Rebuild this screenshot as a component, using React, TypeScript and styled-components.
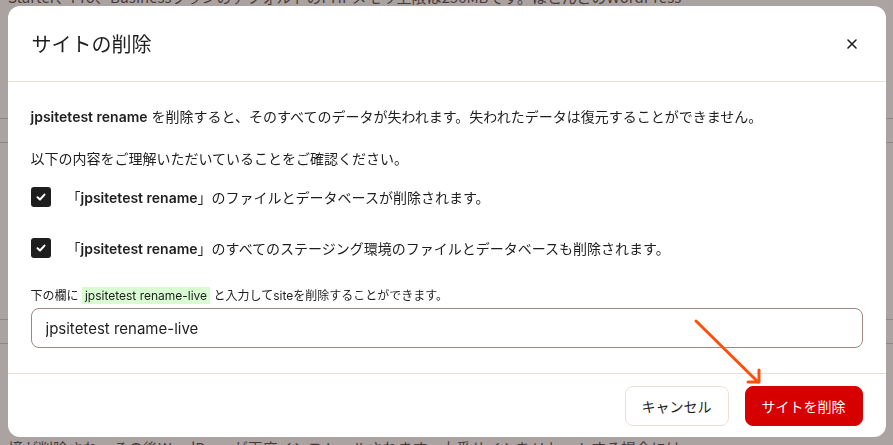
import React, { useState } from 'react';
import styled, { createGlobalStyle } from 'styled-components';

const GlobalStyle = createGlobalStyle`
  html, body {
    margin: 0;
    padding: 0;
    height: 100%;
    overflow: hidden;
  }
  body {
    font-family: Inter, "Noto Sans CJK JP", sans-serif;
    color: #1e1e1e;
  }
`;

const Page = styled.div`
  height: 100vh;
  display: flex;
  flex-direction: column;
  justify-content: space-between;
  padding: 0 8px;
  background: #fff;
  font-family: "Noto Sans CJK JP", sans-serif;
  font-size: 15px;
  line-height: 20px;
  color: #3a3030;
  overflow: hidden;
`;

const PageLine = styled.div<{ edge: 'top' | 'bottom' }>`
  white-space: nowrap;
  margin-top: ${p => (p.edge === 'top' ? '-13px' : '0')};
  margin-bottom: ${p => (p.edge === 'bottom' ? '-13px' : '0')};
`;

const TableRows = styled.div`
  display: flex;
  flex-direction: column;
  gap: 176px;
  margin: 16px -8px 0;
`;

const RowPair = styled.div`
  height: 23px;
  border-top: 1px solid #c9c2c2;
  border-bottom: 1px solid #c9c2c2;
`;

const Overlay = styled.div`
  position: fixed;
  inset: 0;
  background: rgba(85, 71, 69, 0.5);
  display: flex;
  align-items: center;
  justify-content: center;
`;

const Modal = styled.div`
  width: 878px;
  height: 431px;
  margin-top: -2px;
  background: #fff;
  border-radius: 12px;
  display: flex;
  flex-direction: column;
  overflow: hidden;
  position: relative;
`;

const Header = styled.div`
  height: 75px;
  flex: none;
  display: flex;
  align-items: center;
  justify-content: space-between;
  padding: 0 24px 0 24px;
  border-bottom: 1px solid #ebe0d7;
`;

const Title = styled.h2`
  margin: 0;
  font-family: "Noto Sans CJK JP", sans-serif;
  font-size: 20px;
  font-weight: 400;
  color: #1e1e1e;
`;

const CloseButton = styled.button`
  background: none;
  border: none;
  padding: 0;
  width: 20px;
  height: 20px;
  display: flex;
  align-items: center;
  justify-content: center;
  cursor: pointer;
  color: #1e1e1e;
`;

const Body = styled.div`
  flex: 1;
  padding: 25px 23px 0 23px;
  display: flex;
  flex-direction: column;
  border-bottom: 1px solid #e6ddd6;
`;

const Text = styled.p<{ gap?: number }>`
  margin: 0 0 ${p => p.gap ?? 0}px 0;
  font-size: 14px;
  line-height: 20px;
  color: #1e1e1e;
`;

const CheckRow = styled.label<{ gap?: number }>`
  display: flex;
  align-items: center;
  gap: 16px;
  height: 20px;
  margin-bottom: ${p => p.gap ?? 0}px;
  font-size: 14px;
  cursor: pointer;
`;

const Box = styled.span`
  width: 20px;
  height: 20px;
  flex: none;
  border-radius: 3px;
  background: #1e1e1e;
  display: flex;
  align-items: center;
  justify-content: center;
`;

const Strong = styled.strong`
  font-weight: 600;
`;

const HintLabel = styled.div`
  font-size: 12px;
  line-height: 16px;
  margin-bottom: 4px;
  color: #1e1e1e;
`;

const Code = styled.span`
  background: #d8fbd2;
  padding: 1px 3px;
`;

const Input = styled.input`
  height: 40px;
  box-sizing: border-box;
  width: 100%;
  border: 1px solid #9c8782;
  border-radius: 8px;
  padding: 0 14px;
  font-family: Inter, "Noto Sans CJK JP", sans-serif;
  font-size: 15px;
  color: #1e1e1e;
  outline: none;
`;

const Footer = styled.div`
  height: 63px;
  flex: none;
  display: flex;
  align-items: center;
  justify-content: flex-end;
  gap: 16px;
  padding: 0 23px 0 0;
`;

const Button = styled.button<{ danger?: boolean }>`
  height: 40px;
  padding: 0 16px;
  border-radius: 8px;
  font-family: "Noto Sans CJK JP", sans-serif;
  font-size: 14px;
  cursor: pointer;
  border: 1px solid ${p => (p.danger ? '#d70000' : '#ebe0d7')};
  background: ${p => (p.danger ? '#d70000' : '#fff')};
  color: ${p => (p.danger ? '#fff' : '#1e1e1e')};
  min-width: ${p => (p.danger ? '116px' : '103px')};
`;

const Arrow = styled.svg`
  position: absolute;
  left: 684px;
  top: 312px;
  pointer-events: none;
`;

const Check = () => (
  <svg width="12" height="12" viewBox="0 0 12 12">
    <path d="M2.5 6.2 L5 8.5 L9.5 3.6" fill="none" stroke="#fff" strokeWidth="2" strokeLinecap="round" strokeLinejoin="round" />
  </svg>
);

export default function App() {
  const [value, setValue] = useState('jpsitetest rename-live');
  const site = 'jpsitetest rename';

  return (
    <>
      <GlobalStyle />
      <Page>
        <PageLine edge="top">Starter、Pro、BusinessプランのデフォルトのPHPメモリ上限は256MBです。ほとんどのWordPress</PageLine>
        <TableRows>
          <RowPair />
          <RowPair />
        </TableRows>
        <PageLine edge="bottom">境が削除され、その後WordPressが再度インストールされます。本番サイトをリセットする場合には</PageLine>
      </Page>
      <Overlay>
        <Modal>
          <Header>
            <Title>サイトの削除</Title>
            <CloseButton aria-label="閉じる">
              <svg width="12" height="12" viewBox="0 0 12 12">
                <path d="M2 2 L10 10 M10 2 L2 10" stroke="#1e1e1e" strokeWidth="1.6" strokeLinecap="round" />
              </svg>
            </CloseButton>
          </Header>
          <Body>
            <Text gap={22}>
              <Strong>{site}</Strong> を削除すると、そのすべてのデータが失われます。失われたデータは復元することができません。
            </Text>
            <Text gap={18}>以下の内容をご理解いただいていることをご確認ください。</Text>
            <CheckRow gap={31}>
              <Box><Check /></Box>
              <span>「<Strong>{site}</Strong>」のファイルとデータベースが削除されます。</span>
            </CheckRow>
            <CheckRow gap={30}>
              <Box><Check /></Box>
              <span>「<Strong>{site}</Strong>」のすべてのステージング環境のファイルとデータベースも削除されます。</span>
            </CheckRow>
            <HintLabel>
              下の欄に <Code>jpsitetest rename-live</Code> と入力してsiteを削除することができます。
            </HintLabel>
            <Input value={value} onChange={e => setValue(e.target.value)} />
          </Body>
          <Footer>
            <Button>キャンセル</Button>
            <Button danger>サイトを削除</Button>
          </Footer>
          <Arrow width="80" height="80" viewBox="0 0 80 80">
            <path d="M4 3 L66 64" stroke="#ff4f0a" strokeWidth="3" strokeLinecap="round" fill="none" />
            <path d="M56 64 L67 64 L67 52" stroke="#ff4f0a" strokeWidth="3" strokeLinecap="round" strokeLinejoin="round" fill="none" />
          </Arrow>
        </Modal>
      </Overlay>
    </>
  );
}
